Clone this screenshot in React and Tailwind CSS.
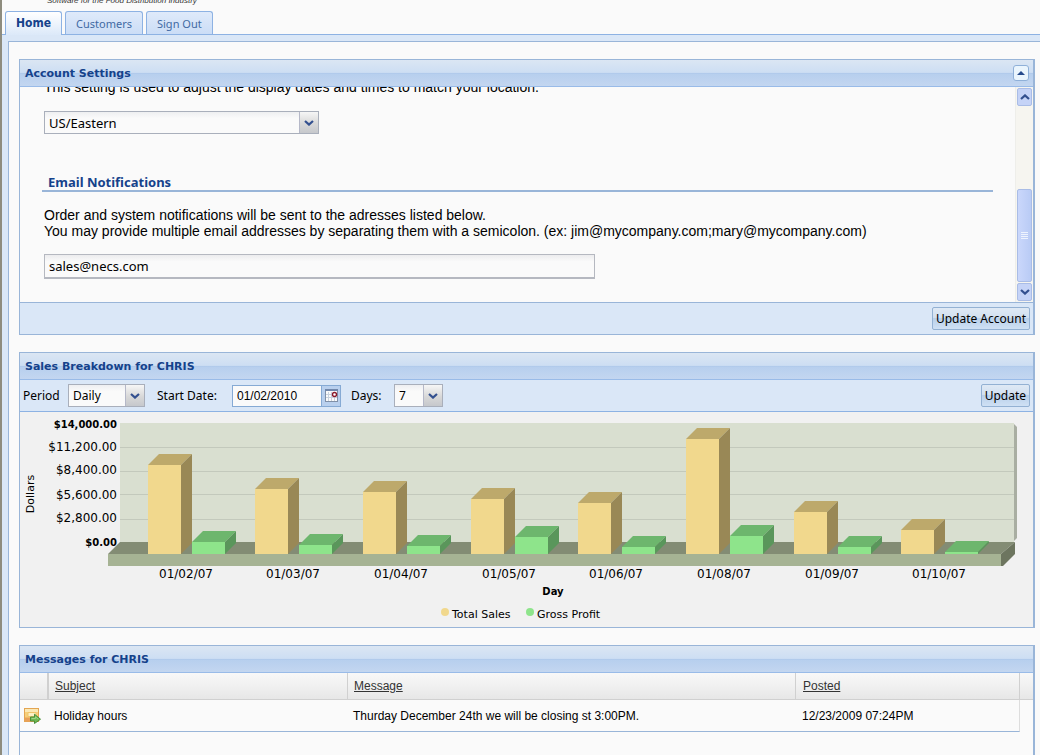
import React from "react";

const GROUPS = [
  { day: "01/02/07", sales: 89, profit: 12 },
  { day: "01/03/07", sales: 65, profit: 9 },
  { day: "01/04/07", sales: 62, profit: 8 },
  { day: "01/05/07", sales: 55, profit: 17 },
  { day: "01/06/07", sales: 51, profit: 7 },
  { day: "01/08/07", sales: 115, profit: 18 },
  { day: "01/09/07", sales: 42, profit: 7 },
  { day: "01/10/07", sales: 24, profit: 2 },
];

const Y_LABELS = [
  { text: "$14,000.00", y: 16, bold: true },
  { text: "$11,200.00", y: 39 },
  { text: "$8,400.00", y: 62 },
  { text: "$5,600.00", y: 87 },
  { text: "$2,800.00", y: 110 },
  { text: "$0.00", y: 134, bold: true },
];

const FLOOR = 142;

function Bar({ x, height, front, top, side }) {
  const y = FLOOR - height;
  return (
    <g>
      <polygon points={`${x},${y} ${x + 11},${y - 11} ${x + 44},${y - 11} ${x + 33},${y}`} fill={top} />
      <polygon points={`${x + 33},${y} ${x + 44},${y - 11} ${x + 44},${FLOOR - 11} ${x + 33},${FLOOR}`} fill={side} />
      <rect x={x} y={y} width="33" height={height} fill={front} />
    </g>
  );
}

function SalesChart() {
  return (
    <svg viewBox="0 0 1013 215" className="block h-auto w-full bg-[#f1f1f1] font-['DejaVu_Sans',Verdana,sans-serif]" role="img" aria-label="Total sales and gross profit by day">
      <polygon points="993,11 997,15 997,126 993,130" fill="#a9aea2" />
      <rect x="100" y="11" width="894" height="119" fill="#d9dfd0" />
      {[35, 59, 82, 107].map((y) => (
        <line key={y} x1="100" x2="994" y1={y + 0.5} y2={y + 0.5} stroke="#c3c9bc" />
      ))}
      <polygon points="88,142 100,130 995,130 981,142" fill="#838c74" />
      <rect x="88" y="142" width="893" height="12" fill="#a6b394" />
      <polygon points="981,142 995,130 995,142 983,154 981,154" fill="#6d755f" />
      {GROUPS.map((g, i) => {
        const x = Math.round(127.5 + i * 107.7);
        return (
          <g key={g.day}>
            <Bar x={x} height={g.sales} front="#f1d88d" top="#bda96b" side="#998856" />
            <Bar x={x + 44} height={g.profit} front="#8ee48b" top="#6db66d" side="#5a965b" />
            <text x={x + 38} y="166" textAnchor="middle" className="text-[12px]">{g.day}</text>
          </g>
        );
      })}
      {Y_LABELS.map((l) => (
        <text key={l.text} x="97" y={l.y} textAnchor="end" className={l.bold ? "text-[10px] font-bold" : "text-[12px]"}>
          {l.text}
        </text>
      ))}
      <text transform="translate(14 82) rotate(-90)" textAnchor="middle" className="text-[11px]">Dollars</text>
      <text x="533" y="183" textAnchor="middle" className="text-[10px] font-bold">Day</text>
      <circle cx="425" cy="200" r="4" fill="#f1d88d" />
      <text x="432" y="206" className="text-[11px]">Total Sales</text>
      <circle cx="510" cy="200" r="4" fill="#8ee48b" />
      <text x="517" y="206" className="text-[11px]">Gross Profit</text>
    </svg>
  );
}

function PanelHeader({ title, children }) {
  return (
    <div className="flex h-[27px] shrink-0 items-center justify-between border-b border-[#99bbe8] bg-[linear-gradient(#dbe6f3_0%,#cddef3_48%,#a9c4e8_49%,#b7cfee_54%,#c3d6f0_100%)] pr-1 pl-[5px]">
      <h2 className="pt-0.5 font-['DejaVu_Sans',sans-serif] text-[11px] leading-4 font-bold text-[#15428b]">{title}</h2>
      {children}
    </div>
  );
}

function Chevron({ up }) {
  return (
    <svg viewBox="0 0 10 6" className="h-[6px] w-[10px]" aria-hidden="true">
      <path d={up ? "M1 5 5 1.4 9 5" : "M1 1 5 4.6 9 1"} fill="none" stroke="#33508f" strokeWidth="2.2" />
    </svg>
  );
}

function Select({ id, label, value, className }) {
  return (
    <div className={`relative h-[23px] border border-[#a9afbb] ${className}`}>
      <select id={id} aria-label={label} defaultValue={value} className="h-full w-full appearance-none bg-[linear-gradient(#eeeff1,#fafafa_30%)] pr-5 pl-1">
        <option>{value}</option>
      </select>
      <span className="pointer-events-none absolute inset-y-0 right-0 flex w-[19px] items-center justify-center border-l border-[#b5b8c8] bg-[linear-gradient(#f6f6f6,#d8d8d8_55%,#c6c8cc)]">
        <Chevron />
      </span>
    </div>
  );
}

function Button({ children }) {
  return (
    <button type="button" className="h-[23px] rounded-[2px] border border-[#93b1d3] bg-[linear-gradient(#dfe9f5,#d2e0f0_45%,#b9d0ea_50%,#cfe0f4)] px-[3px] text-black">
      {children}
    </button>
  );
}

function ScrollButton({ up }) {
  return (
    <button type="button" aria-label={up ? "Scroll up" : "Scroll down"} className="flex h-[18px] w-[15px] shrink-0 items-center justify-center rounded-[2px] border border-[#a9bce6] bg-[#c5d3f7]">
      <Chevron up={up} />
    </button>
  );
}

const TAB = "h-[23px] rounded-t-[3px] border border-b-0 border-[#8db2e3] leading-[23px]";

export default function App() {
  return (
    <div className="flex min-h-screen flex-col border-l-2 border-[#8e8c7e] bg-[#fafafa] font-['Noto_Sans',Tahoma,sans-serif] text-[12px] leading-4 text-black">
      <header className="flex h-[11px] items-start overflow-hidden pl-[45px]">
        <p className="-mt-1 font-['Liberation_Sans',Arial,sans-serif] text-[8px] leading-[10px] text-[#333] italic">Software for the Food Distribution Industry</p>
      </header>

      <nav className="flex h-[24px] items-start gap-[3px] border-b border-[#8db2e3] pl-[3px]">
        <a href="#home" className={`${TAB} relative z-10 h-[24px] bg-[linear-gradient(#fff,#dce9f9)] px-[10px] font-['DejaVu_Sans_Condensed','DejaVu_Sans',sans-serif] font-bold text-[#15428b]`}>Home</a>
        <a href="#customers" className={`${TAB} bg-[linear-gradient(#dfeafa,#cbddf6)] px-[10px] text-[11px] text-[#416aa3]`}>Customers</a>
        <a href="#signout" className={`${TAB} bg-[linear-gradient(#dfeafa,#cbddf6)] px-[10px] text-[11px] text-[#416aa3]`}>Sign Out</a>
      </nav>

      <main className="flex flex-1 flex-col bg-[#dae7f7] pt-1.5 pl-1.5">
        <div className="flex flex-1 flex-col gap-[17px] border-t border-l border-[#99b5d8] bg-[#fafafa] pt-[17px] pr-[5px] pl-[10px]">
          <section className="border border-r-2 border-[#99b5d8]">
            <PanelHeader title="Account Settings">
              <button type="button" aria-label="Collapse" className="flex size-[16px] items-center justify-center rounded-[3px] border border-[#8fb0d8] bg-[#eaf5fd]">
                <svg viewBox="0 0 8 4" className="h-1 w-2" aria-hidden="true"><path d="M4 0 8 4H0Z" fill="#254a8c" /></svg>
              </button>
            </PanelHeader>
            <div className="flex h-[215px]">
              <div className="flex min-w-0 flex-1 flex-col justify-end overflow-hidden pr-[22px] pb-[23px] pl-[22px]">
                <p className="pl-0.5 font-['Liberation_Sans',Arial,sans-serif] text-[14px] leading-4">This setting is used to adjust the display dates and times to match your location.</p>
                <div className="mt-4 pl-0.5 text-[13px]">
                  <Select id="timezone" label="Time zone" value="US/Eastern" className="w-[275px]" />
                </div>
                <h3 className="mt-10 border-b-2 border-[#99b5d8] pl-1.5 text-[13px] leading-4 font-bold text-[#15428b]">
                  <label htmlFor="emails">Email Notifications</label>
                </h3>
                <p className="mt-[15px] pl-0.5 font-['Liberation_Sans',Arial,sans-serif] text-[14px] leading-4">
                  Order and system notifications will be sent to the adresses listed below.
                  <br />
                  You may provide multiple email addresses by separating them with a semicolon. (ex: jim@mycompany.com;mary@mycompany.com)
                </p>
                <input id="emails" type="text" defaultValue="sales@necs.com" className="mt-[15px] ml-0.5 h-[25px] w-[551px] shrink-0 border border-b-2 border-[#b5b8c0] bg-[linear-gradient(#ececee,#fafafa_30%)] px-1 text-[13px]" />
              </div>
              <div className="flex w-[18px] flex-col items-center border-l border-[#eeeeea] bg-[#f6f5f0] py-px">
                <ScrollButton up />
                <div className="flex-1" />
                <div className="mb-px flex h-[93px] w-[15px] items-center justify-center rounded-[2px] border border-[#a9bce6] bg-[linear-gradient(90deg,#cad7fb,#b9cbf5)]">
                  <svg viewBox="0 0 7 8" className="h-2 w-[7px]" aria-hidden="true"><path d="M0 .5h7M0 2.5h7M0 4.5h7M0 6.5h7" stroke="#eef3fe" /></svg>
                </div>
                <ScrollButton />
              </div>
            </div>
            <div className="flex h-[32px] items-center justify-end border-t border-[#99b5d8] bg-[#dae7f7] pr-[3px]">
              <Button>Update Account</Button>
            </div>
          </section>

          <section className="border border-r-2 border-[#99b5d8]">
            <PanelHeader title="Sales Breakdown for CHRIS" />
            <form className="flex h-[32px] items-center border-b border-[#8db2e3] bg-[#dae7f7] pr-[3px] pl-[3px]">
              <label htmlFor="period" className="w-[45px]">Period</label>
              <Select id="period" value="Daily" className="w-[77px]" />
              <label htmlFor="start" className="ml-3 w-[75px]">Start Date:</label>
              <div className="flex h-[22px] w-[109px] border border-[#86aad4]">
                <input id="start" type="text" defaultValue="01/02/2010" className="w-0 flex-1 bg-[#fafafa] px-1 font-['Liberation_Sans',Arial,sans-serif]" />
                <button type="button" aria-label="Choose date" className="flex w-[19px] items-center justify-center border-l border-[#86aad4] bg-[#b9d0ee]">
                  <svg viewBox="0 0 13 13" className="size-[13px]" aria-hidden="true">
                    <rect x=".5" y="1.5" width="12" height="11" fill="#fbfbfb" stroke="#8090a8" />
                    <rect x="0" y="0" width="13" height="2" fill="#7288ac" />
                    <path d="M3.5 3v9M6.5 3v9M9.5 9v3M1 5.500h6M1 8.500h11" stroke="#c9d2de" />
                    <circle cx="9.500" cy="5.500" r="2" fill="#fff" stroke="#8c1c2c" strokeWidth="1.400" />
                  </svg>
                </button>
              </div>
              <label htmlFor="days" className="ml-[10px] w-[43px]">Days:</label>
              <Select id="days" value="7" className="w-[49px]" />
              <div className="flex-1" />
              <Button>Update</Button>
            </form>
            <SalesChart />
          </section>

          <section className="flex flex-1 flex-col border border-r-2 border-b-0 border-[#99b5d8]">
            <PanelHeader title="Messages for CHRIS" />
            <table className="w-full table-fixed border-separate border-spacing-0 text-left font-['Liberation_Sans',Arial,sans-serif]">
              <thead className="bg-[linear-gradient(#f8f8f8,#f0f0f0_50%,#e6e6e6)]">
                <tr className="h-[27px] text-[#333]">
                  <th className="w-[29px] border-r-2 border-b border-[#d0d0d0]" aria-label="Open" />
                  <th className="w-[299px] border-r border-b border-[#d0d0d0] pl-1.5 font-normal underline">Subject</th>
                  <th className="border-r border-b border-[#d0d0d0] pl-1.5 font-normal underline">Message</th>
                  <th className="w-[224px] border-r border-b border-[#d0d0d0] pl-[7px] font-normal underline">Posted</th>
                  <th className="w-[13px] border-b border-[#d0d0d0]" aria-hidden="true" />
                </tr>
              </thead>
              <tbody>
                <tr className="h-[32px]">
                  <td className="border-b border-[#99b5d8] pl-1">
                    <svg viewBox="0 0 17 16" className="block h-4 w-[17px]" aria-hidden="true">
                      <rect x=".5" y=".5" width="14" height="13" fill="#f7cf78" stroke="#e3a552" />
                      <path d="M1 1h13v3H1z" fill="#fbe8b4" />
                      <path d="M4 4.500h8v4H4z" fill="#fdf0c4" stroke="#efc36a" />
                      <path d="M1 9.500h6v4H1z" fill="#e9a058" />
                      <path d="M6.500 9h4V6.200l6 5-6 4.300v-2.500h-4z" fill="#6fb852" stroke="#4a8f3c" />
                      <path d="M7.500 10.500h4V8.800l2.500 2.200" fill="none" stroke="#a0d486" />
                    </svg>
                  </td>
                  <td className="border-b border-[#99b5d8] pl-[5px]">Holiday hours</td>
                  <td className="border-b border-[#99b5d8] pl-[5px]">Thurday December 24th we will be closing st 3:00PM.</td>
                  <td className="border-r border-b border-r-[#dddddd] border-b-[#99b5d8] pl-1.5">12/23/2009 07:24PM</td>
                  <td />
                </tr>
              </tbody>
            </table>
          </section>
        </div>
      </main>
    </div>
  );
}
